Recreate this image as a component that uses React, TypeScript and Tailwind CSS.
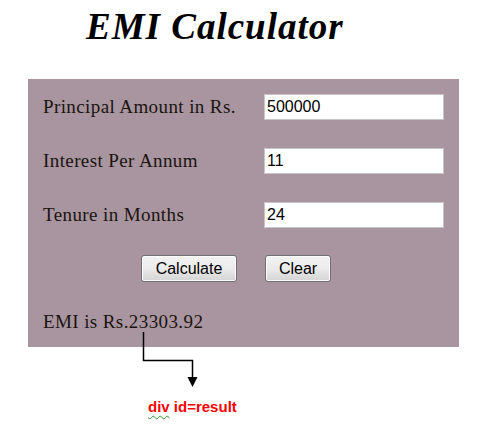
import { useState } from "react";

const serif = { fontFamily: '"Liberation Serif", "Times New Roman", serif' };

const Row = ({ label, value }: { label: string; value: string }) => (
  <div className="flex h-[26px] items-center">
    <span className="w-[221px] text-[19px] tracking-[0.4px] text-[#1b1410]">{label}</span>
    <input
      readOnly
      value={value}
      className="h-[26px] w-[180px] border border-[#c9c4c6] bg-white px-[2px] font-['Liberation_Sans',Arial,sans-serif] text-[16px] text-black outline-none"
    />
  </div>
);

const XpButton = ({ label, width }: { label: string; width: string }) => (
  <button
    type="button"
    className={`h-[27px] ${width} rounded-[3px] border border-[#707070] bg-gradient-to-b from-[#f2f2f2] via-[#ebebeb] to-[#d4d4d4] font-['Liberation_Sans',Arial,sans-serif] text-[16px] text-black shadow-[inset_0_0_0_1px_#fcfcfc]`}
  >
    {label}
  </button>
);

export default function App() {
  const [emi] = useState("23303.92");

  return (
    <div className="relative h-[427px] w-[490px] overflow-hidden bg-white" style={serif}>
      <h1 className="pl-[86px] pt-[6px] text-[37px] font-bold italic leading-[42px] tracking-[1px] text-black">
        EMI Calculator
      </h1>

      <div className="ml-[28px] mt-[31px] h-[268px] w-[431px] bg-[#a8959f] pl-[15px] pt-[15px]">
        <div className="flex flex-col gap-[28px]">
          <Row label="Principal Amount in Rs." value="500000" />
          <Row label="Interest Per Annum" value="11" />
          <Row label="Tenure in Months" value="24" />
        </div>

        <div className="mt-[27px] flex gap-[28px] pl-[98px]">
          <XpButton label="Calculate" width="w-[96px]" />
          <XpButton label="Clear" width="w-[66px]" />
        </div>

        <p className="mt-[29px] text-[19px] leading-[22px] tracking-[0.4px] text-[#1b1410]">EMI is Rs.{emi}</p>
      </div>

      {/* annotation arrow pointing at the result div */}
      <svg className="absolute left-0 top-0" width="490" height="427">
        <path d="M143.5 332 V360.5 H192.5 V378" stroke="#000" strokeWidth="1.5" fill="none" />
        <path d="M187.5 377 H197.5 L192.5 387 Z" fill="#000" />
      </svg>

      <p className="absolute left-[148px] top-[396px] font-['Liberation_Sans',Arial,sans-serif] text-[15px] font-bold text-[#ff0000]">
        <span className="underline decoration-[#2e9e2e] decoration-wavy decoration-1 underline-offset-[3px]">div</span> id=result
      </p>
    </div>
  );
}
